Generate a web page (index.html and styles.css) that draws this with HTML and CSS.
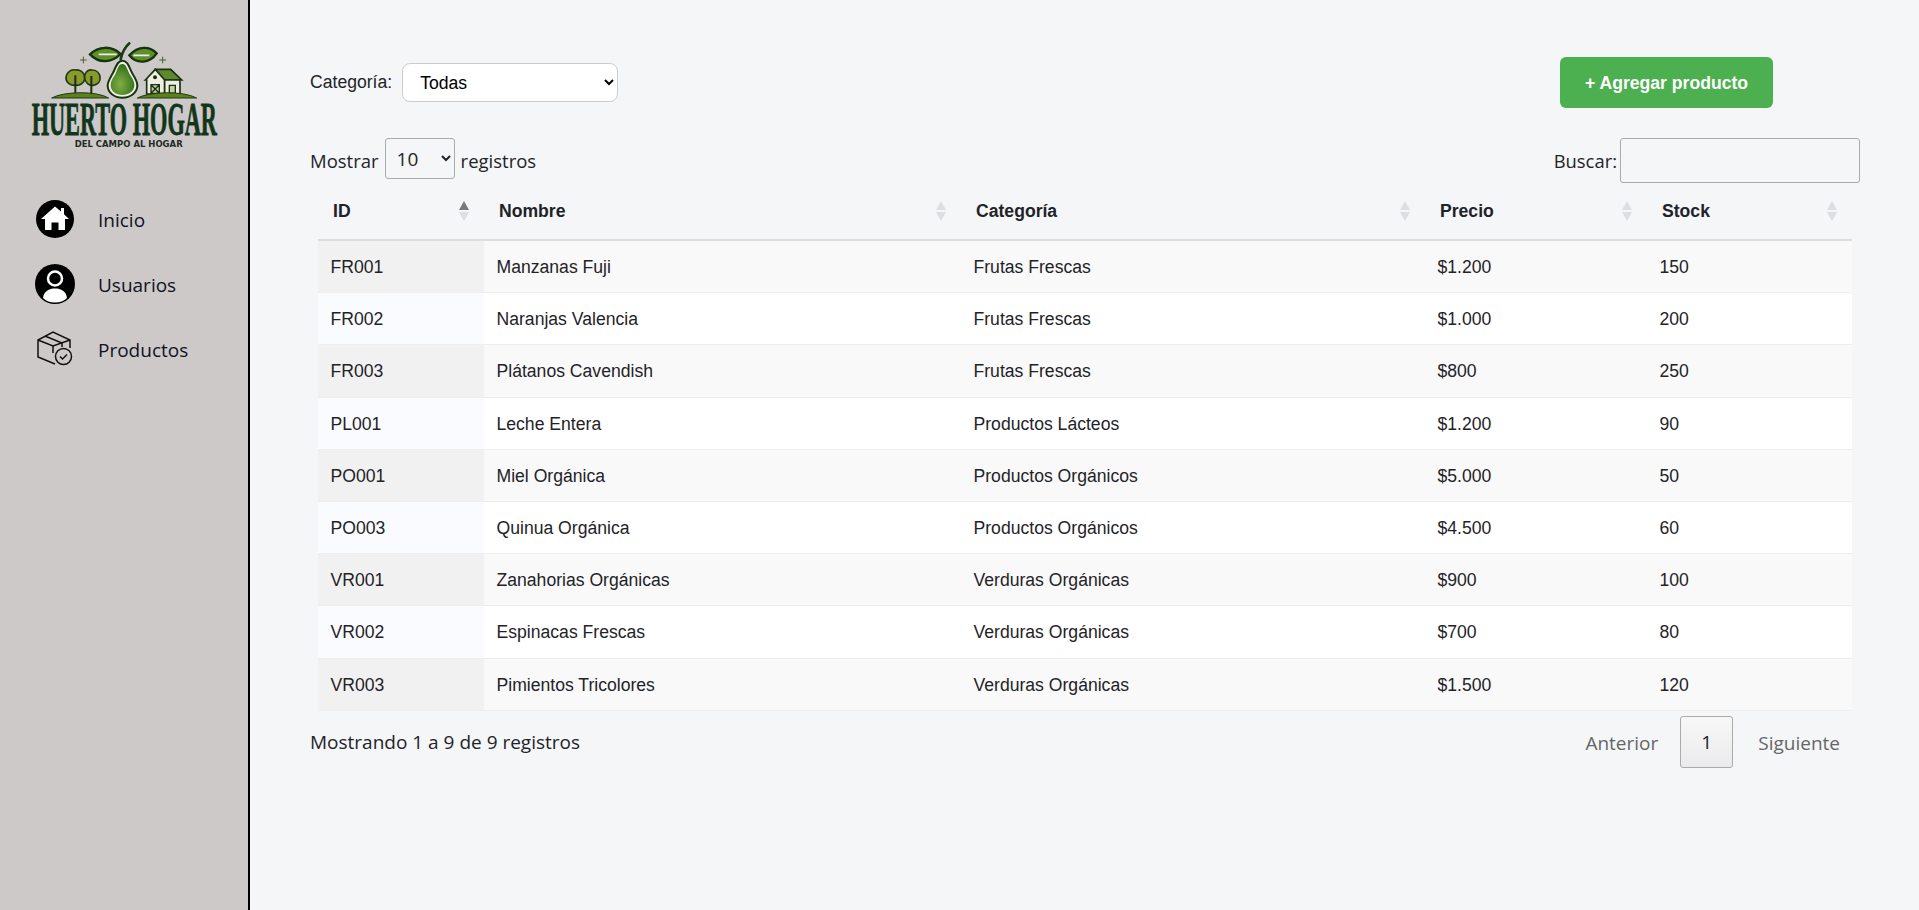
FILE: index.html
```html
<!DOCTYPE html>
<html lang="es">
<head>
    <meta charset="UTF-8">
    <title>Productos - HuertoHogar</title>
    <link rel="stylesheet" href="styles.css">
</head>
<body>
    <aside class="sidebar">
        <svg class="logo" viewBox="0 0 744 420" aria-label="HuertoHogar">
            <defs>
                <radialGradient id="pulp" cx="0.4" cy="0.65" r="0.7">
                    <stop offset="0" stop-color="#7fb040"/>
                    <stop offset="1" stop-color="#2f6a1c"/>
                </radialGradient>
            </defs>
            <g class="logo-art">
                <!-- hojas y tallo -->
                <path d="M362 118C366 100 372 84 388 70" fill="none" stroke="#1c3a14" stroke-width="8" stroke-linecap="round"/>
                <path d="M270 103C295 78 335 76 362 102C335 130 295 130 270 103Z" fill="#5f8f2a" stroke="#16330f" stroke-width="7"/>
                <path d="M388 106C415 76 450 78 470 100C450 130 410 134 388 106Z" fill="#5f8f2a" stroke="#16330f" stroke-width="7"/>
                <path d="M296 103H350M400 106H448" stroke="#e8efe0" stroke-width="5"/>
                <!-- palta -->
                <path d="M367 122C385 122 388 146 398 162C408 178 412 186 412 196C412 218 392 233 367 233C342 233 323 218 323 196C323 186 328 178 337 162C347 146 350 122 367 122Z" fill="#f1f1e6" stroke="#17350f" stroke-width="6"/>
                <path d="M367 132C380 132 382 152 391 166C399 178 403 186 403 196C403 214 386 225 367 225C348 225 332 214 332 196C332 186 336 178 344 166C352 152 354 132 367 132Z" fill="url(#pulp)"/>
                <!-- arboles -->
                <path d="M226 150C212 146 198 160 198 174C198 188 212 198 228 196C246 196 256 184 254 170C252 156 240 148 226 150Z" fill="#8b9a2c" stroke="#1f3a12" stroke-width="5"/>
                <path d="M276 150C262 148 252 160 254 174C256 188 266 198 280 196C294 194 302 184 300 170C298 158 288 150 276 150Z" fill="#8b9a2c" stroke="#1f3a12" stroke-width="5"/>
                <path d="M226 166V220M274 168V220" stroke="#1c3010" stroke-width="6"/>
                <path d="M155 234C190 214 290 212 326 234Z" fill="#5d7f1e" stroke="#1c3a12" stroke-width="3"/>
                <!-- granja -->
                <path d="M466 148H512L545 180H470Z" fill="#5c8a2a" stroke="#1c3012" stroke-width="5"/>
                <path d="M436 180L466 148L494 180V222H440V180Z" fill="#eeeee2" stroke="#1c3012" stroke-width="5"/>
                <path d="M494 180H540V222H494Z" fill="#eeeee2" stroke="#1c3012" stroke-width="5"/>
                <circle cx="465" cy="172" r="6" fill="#1c3012"/>
                <path d="M453 194H478V220H453ZM453 194L478 220M478 194L453 220M508 196H526V220H508Z" fill="#c7cda8" stroke="#1c3012" stroke-width="4"/>
                <path d="M412 234C450 214 550 212 590 234Z" fill="#5d7f1e" stroke="#1c3a12" stroke-width="3"/>
                <!-- destellos -->
                <path d="M250 110V130M240 120H260M488 110V130M478 120H498" stroke="#4a5f30" stroke-width="3"/>
            </g>
            <text class="logo-name" transform="translate(95 345) scale(0.478 1)">HUERTO HOGAR</text>
            <text class="logo-tagline" x="224" y="381" textLength="324" lengthAdjust="spacingAndGlyphs">DEL CAMPO AL HOGAR</text>
        </svg>

        <nav class="menu">
            <a class="menu-item" href="#">
                <svg class="menu-icon" viewBox="0 0 40 40">
                    <circle cx="20" cy="20" r="19"/>
                    <path d="M20 7.500L26 12.500V9H29V15.200L34 20H30V31H23.500V23.500H16.500V31H10V20H6Z" fill="#fff"/>
                </svg>
                <span>Inicio</span>
            </a>
            <a class="menu-item" href="#">
                <svg class="menu-icon" viewBox="0 0 40 40">
                    <circle cx="20" cy="20" r="20"/>
                    <circle cx="20" cy="14.500" r="7" fill="none" stroke="#fff" stroke-width="2.500"/>
                    <path d="M8 34C9 27 14 24.500 20 24.500C26 24.500 31 27 32 34C29 37 25 38.500 20 38.500C15 38.500 11 37 8 34Z" fill="#fff"/>
                </svg>
                <span>Usuarios</span>
            </a>
            <a class="menu-item" href="#">
                <svg class="menu-icon" viewBox="0 0 40 40" fill="none" stroke="#111" stroke-width="1.500">
                    <path d="M20 35L3 28V11L18 3L35 11V19M3 11L18 17L35 11M18 17V24M10 7L27 14V18"/>
                    <circle cx="28.500" cy="27.500" r="8"/>
                    <path d="M25 27.500L27.500 30L32 25.500"/>
                </svg>
                <span>Productos</span>
            </a>
        </nav>
    </aside>

    <main class="content">
        <div class="top-bar">
            <div class="filter">
                <label for="categoria">Categoría:</label>
                <select id="categoria" class="filter-select">
                    <option>Todas</option>
                </select>
            </div>
            <button class="btn-add">+ Agregar producto</button>
        </div>

        <div class="dt-controls">
            <div class="dt-length">
                Mostrar
                <select class="dt-select">
                    <option>10</option>
                </select>
                registros
            </div>
            <div class="dt-search">
                <label for="buscar">Buscar:</label>
                <input type="search" id="buscar">
            </div>
        </div>

        <table class="dt-table">
            <colgroup>
                <col class="col-id">
                <col class="col-name">
                <col class="col-cat">
                <col class="col-price">
                <col class="col-stock">
            </colgroup>
            <thead>
                <tr>
                    <th class="sort sort-asc">ID</th>
                    <th class="sort">Nombre</th>
                    <th class="sort">Categoría</th>
                    <th class="sort">Precio</th>
                    <th class="sort">Stock</th>
                </tr>
            </thead>
            <tbody>
                <tr><td>FR001</td><td>Manzanas Fuji</td><td>Frutas Frescas</td><td>$1.200</td><td>150</td></tr>
                <tr><td>FR002</td><td>Naranjas Valencia</td><td>Frutas Frescas</td><td>$1.000</td><td>200</td></tr>
                <tr><td>FR003</td><td>Plátanos Cavendish</td><td>Frutas Frescas</td><td>$800</td><td>250</td></tr>
                <tr><td>PL001</td><td>Leche Entera</td><td>Productos Lácteos</td><td>$1.200</td><td>90</td></tr>
                <tr><td>PO001</td><td>Miel Orgánica</td><td>Productos Orgánicos</td><td>$5.000</td><td>50</td></tr>
                <tr><td>PO003</td><td>Quinua Orgánica</td><td>Productos Orgánicos</td><td>$4.500</td><td>60</td></tr>
                <tr><td>VR001</td><td>Zanahorias Orgánicas</td><td>Verduras Orgánicas</td><td>$900</td><td>100</td></tr>
                <tr><td>VR002</td><td>Espinacas Frescas</td><td>Verduras Orgánicas</td><td>$700</td><td>80</td></tr>
                <tr><td>VR003</td><td>Pimientos Tricolores</td><td>Verduras Orgánicas</td><td>$1.500</td><td>120</td></tr>
            </tbody>
        </table>

        <div class="dt-footer">
            <div class="dt-info">Mostrando 1 a 9 de 9 registros</div>
            <div class="dt-paging">
                <a class="page-link" href="#">Anterior</a>
                <a class="page-link page-current" href="#">1</a>
                <a class="page-link" href="#">Siguiente</a>
            </div>
        </div>
    </main>
</body>
</html>
```

FILE: styles.css
```css
* {
    box-sizing: border-box;
}

html,
body {
    height: 100%;
}

body {
    margin: 0;
    display: flex;
    background-color: #f4f6f8;
    color: #1f2328;
    font-family: "Liberation Sans", Arial, sans-serif;
    font-size: 17.6px;
}

.sidebar {
    flex: 0 0 250px;
    background-color: #cdc9c9;
    border-right: 2px solid #000;
    padding-top: 20px;
}

.logo {
    display: block;
    width: 248px;
    height: 140px;
}

.logo-art {
    filter: blur(0.6px);
}

.logo-name {
    font-family: "Liberation Serif", serif;
    font-weight: 700;
    font-size: 140px;
    fill: #12351c;
    stroke: #12351c;
    stroke-width: 2.500px;
}

.logo-tagline {
    font-family: "DejaVu Sans", sans-serif;
    font-weight: 700;
    font-size: 28px;
    fill: #232a22;
}

.menu {
    display: flex;
    flex-direction: column;
    gap: 25px;
    margin-top: 39px;
    padding-left: 35px;
}

.menu-item {
    display: flex;
    align-items: center;
    gap: 23px;
    height: 40px;
    color: #10131f;
    font-family: "Open Sans", sans-serif;
    font-size: 19px;
    text-decoration: none;
}

.menu-item span {
    padding-top: 2px;
}

.menu-icon {
    flex: 0 0 40px;
    width: 40px;
    height: 40px;
}

.content {
    flex: 1;
    padding: 57px 59px 0 60px;
    min-width: 0;
}

.top-bar {
    display: flex;
    align-items: center;
    justify-content: space-between;
    height: 51px;
    margin-bottom: 30px;
}

.filter {
    display: flex;
    align-items: center;
    gap: 10px;
}

.filter-select {
    width: 216px;
    height: 39px;
    padding: 0 13px;
    background-color: #fff;
    border: 1px solid #ccc;
    border-radius: 8px;
    color: #000;
    font-family: inherit;
    font-size: 17.6px;
}

.btn-add {
    width: 213px;
    height: 51px;
    margin-right: 87px;
    padding-top: 3px;
    background-color: #4caf50;
    border: none;
    border-radius: 6px;
    color: #fff;
    font-family: inherit;
    font-size: 17.6px;
    font-weight: 700;
}

.dt-controls {
    display: flex;
    justify-content: space-between;
    align-items: flex-start;
    height: 45px;
    font-family: "Open Sans", sans-serif;
    font-size: 18.500px;
}

.dt-length {
    display: flex;
    align-items: center;
    gap: 6px;
    height: 43px;
    padding-top: 2px;
}

.dt-select {
    width: 70px;
    height: 41px;
    margin-top: -4px;
    padding: 0 7px;
    background-color: transparent;
    border: 1px solid #aaa;
    border-radius: 3px;
    font-family: inherit;
    font-size: 19px;
    color: #1f2328;
}

.dt-search {
    display: flex;
    align-items: center;
    gap: 3px;
    height: 45px;
    font-size: 18.400px;
}

.dt-search input {
    width: 240px;
    height: 45px;
    background-color: transparent;
    border: 1px solid #aaa;
    border-radius: 3px;
}

.dt-table {
    width: 1534px;
    margin-left: 8px;
    table-layout: fixed;
    border-collapse: separate;
    border-spacing: 0;
}

.col-id { width: 166px; }
.col-name { width: 477px; }
.col-cat { width: 464px; }
.col-price { width: 222px; }
.col-stock { width: 205px; }

.dt-table th {
    position: relative;
    height: 58px;
    padding: 0 15px;
    border-bottom: 2px solid #ddd;
    text-align: left;
    font-weight: 700;
}

/* flechas de orden de la tabla */
.sort::before,
.sort::after {
    content: "";
    position: absolute;
    right: 15px;
    border-left: 5px solid transparent;
    border-right: 5px solid transparent;
}

.sort::before {
    top: 18px;
    border-bottom: 9px solid #dcdee1;
}

.sort::after {
    top: 29px;
    border-top: 9px solid #dcdee1;
}

.sort-asc::before {
    border-bottom-color: #77797c;
}

.dt-table td {
    height: 52.200px;
    padding: 2px 13px 0 12.500px;
    border-bottom: 1px solid #eee;
    background-color: #fff;
}

.dt-table tbody tr:nth-child(odd) td {
    background-color: #f9f9f9;
}

.dt-table tbody td:first-child {
    background-color: #fafbfe;
}

.dt-table tbody tr:nth-child(odd) td:first-child {
    background-color: #f1f1f1;
}

.dt-footer {
    display: flex;
    justify-content: space-between;
    align-items: center;
    margin-top: 5px;
    font-family: "Open Sans", sans-serif;
    font-size: 19px;
}

.dt-paging {
    display: flex;
    align-items: center;
    gap: 23px;
    margin-right: 20px;
}

.page-link {
    padding-top: 2px;
    color: #666;
    text-decoration: none;
}

.page-current {
    display: flex;
    align-items: center;
    justify-content: center;
    width: 53px;
    height: 52px;
    margin: 0 2px 0 -1px;
    padding-top: 0;
    background: linear-gradient(to bottom, #f7f7f7, #ebebed);
    border: 1px solid #aaa;
    border-radius: 3px;
    color: #1f2328;
}
```
